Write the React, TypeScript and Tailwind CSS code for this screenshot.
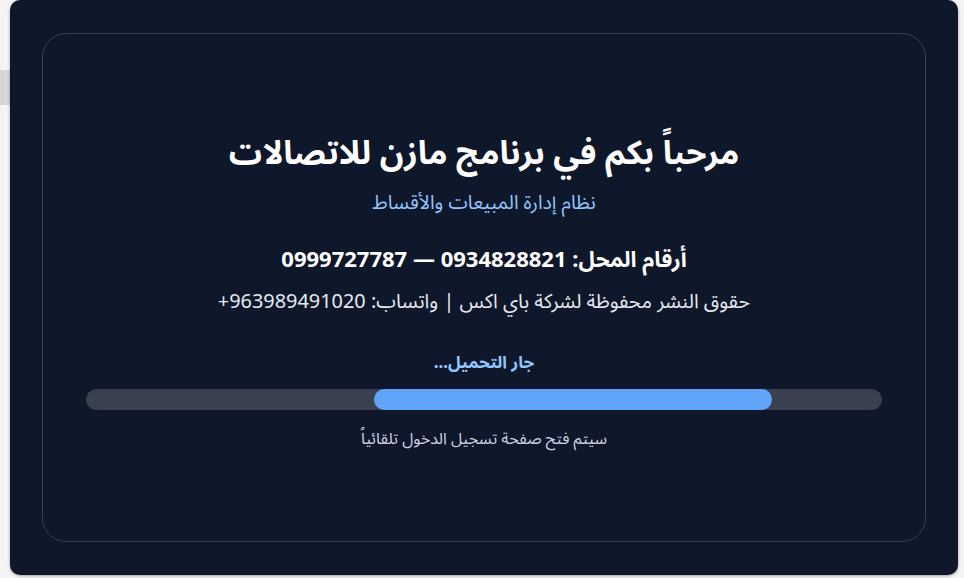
export default function App() {
  return (
    <div
      className="relative h-[578px] w-[964px] overflow-hidden bg-[#f4f4f5]"
      style={{ fontFamily: '"Noto Sans", "Noto Sans Arabic", "DejaVu Sans", sans-serif' }}
    >
      {/* page strip peeking out behind the window */}
      <div className="absolute left-0 top-[70px] h-[35px] w-[12px] bg-[#d6d6d6]" />

      <div className="relative ml-[10px] flex h-[575px] w-[948px] rounded-[10px] bg-[#0f172a] p-[33px_32px] shadow-[0_1px_3px_rgba(0,0,0,0.35)]">
        <div
          dir="rtl"
          className="flex flex-1 flex-col items-center justify-center rounded-[24px] border border-[#334155] px-[43px] pt-[4px] text-center"
        >
          <h1 className="text-[33px] font-bold leading-[44px] text-white">مرحباً بكم في برنامج مازن للاتصالات</h1>
          <p className="mt-[14px] text-[19.5px] leading-[28px] text-[#93c5fd]">نظام إدارة المبيعات والأقساط</p>

          <p className="mt-[27px] text-[22px] font-bold leading-[30px] text-white">
            أرقام المحل: 0934828821 — 0999727787
          </p>
          <p className="mt-[14px] text-[19.9px] leading-[28px] text-[#e5e9f0]">
            حقوق النشر محفوظة لشركة باي اكس | واتساب: <span dir="ltr">+963989491020</span>
          </p>

          <p className="mt-[35px] text-[17px] font-bold leading-[24px] text-[#93c5fd]">جار التحميل...</p>
          <div dir="ltr" className="relative mt-[15px] h-[21px] w-full overflow-hidden rounded-full bg-[#394150]">
            <div className="absolute left-[36.2%] top-0 h-full w-[50%] rounded-full bg-[#60a5fa]" />
          </div>
          <p className="mt-[17px] text-[16px] leading-[22px] text-[#cbd5e1]">سيتم فتح صفحة تسجيل الدخول تلقائياً</p>
        </div>
      </div>
    </div>
  );
}
